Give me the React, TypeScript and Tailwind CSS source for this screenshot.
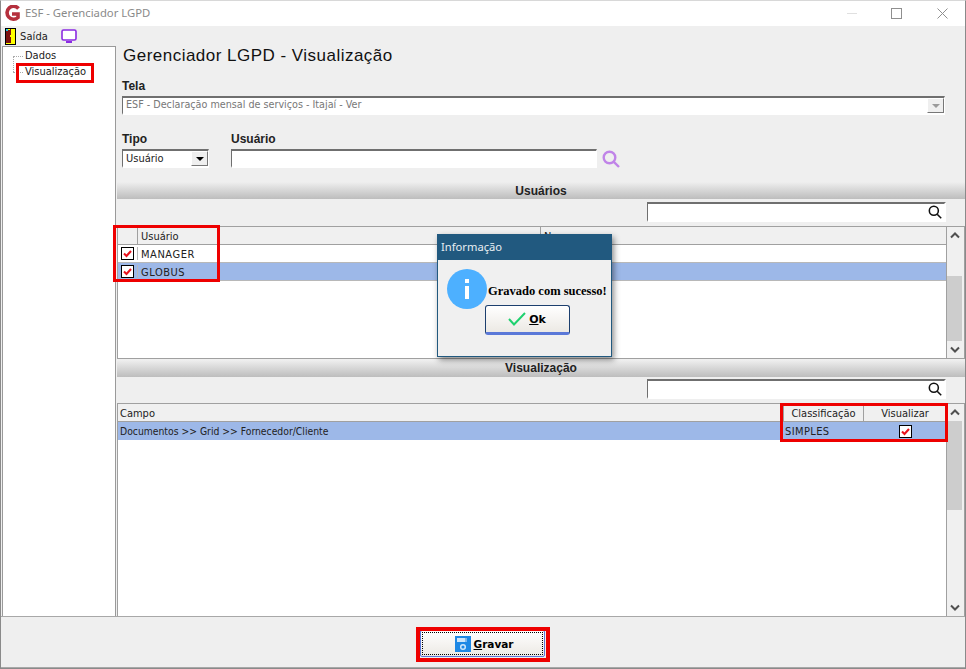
const ui = "font-['DejaVu_Sans_Condensed','DejaVu_Sans',sans-serif]";
const sunken = "border-t-2 border-l border-t-[#6f6f6f] border-l-[#6f6f6f] border-b-2 border-r border-b-white border-r-white bg-white";
const bold = "font-['Liberation_Sans',sans-serif] text-[12px] font-bold";

function Logo() {
  return (
    <svg width="17" height="17" viewBox="0 0 17 17">
      <path d="M14.500 3.500A6.500 6.500 0 1 0 14 12.500V9H8" fill="none" stroke="#b5303d" strokeWidth="3.600" />
    </svg>
  );
}

function DoorIcon() {
  return (
    <svg width="11" height="17" viewBox="0 0 11 17" shapeRendering="crispEdges">
      <rect width="11" height="17" fill="#000" />
      <rect x="1" y="1" width="9" height="15" fill="#ffff00" />
      <path d="M1 3h1V2h3V1h1v14H1z" fill="#7c1010" />
      <rect x="1" y="1" width="2" height="2" fill="#22c8e8" />
      <rect x="5" y="7" width="1" height="2" fill="#ffff00" />
    </svg>
  );
}

function MonitorIcon() {
  return (
    <svg width="16" height="14" viewBox="0 0 16 14">
      <rect x="1" y="1" width="14" height="10" rx="1.500" fill="#fff" stroke="#8b2be2" strokeWidth="1.600" />
      <rect x="5" y="12" width="6" height="2" fill="#8b2be2" />
    </svg>
  );
}

function Floppy() {
  return (
    <svg width="16" height="16" viewBox="0 0 16 16">
      <path d="M0 0h16v16H0z" fill="#1e88e5" />
      <rect x="2" y="2" width="10" height="4" fill="#cfe6fa" />
      <rect x="10" y="2" width="2" height="4" fill="#7fb8ee" />
      <circle cx="8" cy="11" r="2.300" fill="none" stroke="#cfe6fa" strokeWidth="1.500" />
    </svg>
  );
}

function Magnifier({ size, color, stroke }: { size: number; color: string; stroke: number }) {
  return (
    <svg width={size} height={size} viewBox="0 0 18 18" className="shrink-0">
      <circle cx="7.500" cy="7.500" r="5.800" fill="none" stroke={color} strokeWidth={stroke} />
      <path d="M11.800 11.800L17 17" stroke={color} strokeWidth={stroke} />
    </svg>
  );
}

function Tick() {
  return (
    <span className="flex h-[13px] w-[13px] items-center justify-center border border-black bg-white">
      <svg width="11" height="11" viewBox="0 0 11 11">
        <path d="M2 5.500l2.500 2.500L9 3" fill="none" stroke="#e8121c" strokeWidth="2.100" />
      </svg>
    </span>
  );
}

function Caret({ muted = false }: { muted?: boolean }) {
  return (
    <span className="flex h-full w-[17px] items-center justify-center border-t border-l border-t-white border-l-white border-r border-b border-r-[#777] border-b-[#777] bg-[#efefef]">
      <span className={`h-0 w-0 border-x-[4px] border-t-[4px] border-x-transparent ${muted ? "border-t-[#9a9a9a]" : "border-t-black"}`} />
    </span>
  );
}

function SectionBar({ title, nudge = "" }: { title: string; nudge?: string }) {
  return (
    <div className={`flex h-[17px] items-center justify-center bg-gradient-to-b from-[#efefef] to-[#bdbdbd] ${bold} text-[#222] ${nudge}`}>
      {title}
    </div>
  );
}

function SearchBox() {
  return (
    <div className="ml-[530px] flex h-[20px] w-[299px] items-center justify-end border-t-2 border-l border-t-[#6f6f6f] border-l-[#6f6f6f] border-b-2 border-r-2 border-b-white border-r-white bg-white pr-[2px]">
      <Magnifier size={14} color="#111" stroke={2} />
    </div>
  );
}

function Scrollbar({ thumb }: { thumb: string }) {
  return (
    <div className="flex w-[18px] shrink-0 flex-col border-l border-[#a0a0a0] bg-[#f0f0f0]">
      <svg width="16" height="17" viewBox="0 0 16 17" className="shrink-0">
        <path d="M4 10.500l4-4 4 4" fill="none" stroke="#505050" strokeWidth="2" />
      </svg>
      <div className={`mr-[2px] ${thumb} bg-[#cdcdcd]`} />
      <div className="flex-1" />
      <svg width="16" height="17" viewBox="0 0 16 17" className="shrink-0">
        <path d="M4 6.500l4 4 4-4" fill="none" stroke="#505050" strokeWidth="2" />
      </svg>
    </div>
  );
}

function RedBox({ className }: { className: string }) {
  return <div className={`pointer-events-none absolute border-[3px] border-[#ee0000] ${className}`} />;
}

export default function App() {
  return (
    <div className={`${ui} relative flex h-[669px] w-[966px] flex-col overflow-hidden border border-[#8a8a8a] border-t-[#d8d8d8] bg-[#efefef] text-[11px] leading-none text-[#222]`}>
      {/* title bar */}
      <div className="flex h-[25px] shrink-0 items-center bg-white pl-[3px] font-['Noto_Sans',sans-serif] text-[11.300px] text-[#8a8a8a]">
        <Logo />
        <span className="mb-[2px] ml-[4px]">ESF - Gerenciador LGPD</span>
        <div className="ml-auto flex items-center">
          <div className="mr-[34px] h-px w-[10px] bg-[#e0e0e0]" />
          <div className="mr-[35px] h-[11px] w-[11px] border border-[#8f8f8f]" />
          <svg width="11" height="11" viewBox="0 0 11 11" className="mr-[17px]">
            <path d="M0.500 0.500l10 10M10.500 0.500l-10 10" stroke="#8f8f8f" strokeWidth="1" />
          </svg>
        </div>
      </div>

      {/* toolbar */}
      <div className="flex h-[20px] shrink-0 items-center pl-[4px]">
        <DoorIcon />
        <span className="ml-[4px] tracking-[0.1px]">Saída</span>
        <span className="ml-[13px] flex"><MonitorIcon /></span>
      </div>

      <div className="flex min-h-0 flex-1">
        {/* tree */}
        <div className="relative ml-[1px] w-[114px] shrink-0 border-t border-l border-r border-[#9a9a9a] bg-white">
          <div className="absolute left-[10px] top-[9px] h-[16px] border-l border-dotted border-[#aaa]" />
          <div className="absolute left-[10px] top-[9px] w-[10px] border-t border-dotted border-[#aaa]" />
          <div className="absolute left-[10px] top-[25px] w-[10px] border-t border-dotted border-[#aaa]" />
          <div className="flex flex-col gap-[4px] pl-[22px] pt-[3px]">
            <span className="leading-[12px]">Dados</span>
            <span className="leading-[12px]">Visualização</span>
          </div>
        </div>

        {/* content */}
        <div className="flex min-w-0 flex-1 flex-col">
          <h1 className="ml-[7px] h-[25px] font-['Liberation_Sans',sans-serif] text-[17px] leading-[20px] tracking-[0.48px] text-[#111]">
            Gerenciador LGPD - Visualização
          </h1>

          <label className={`ml-[6px] mt-[9px] block h-[12px] ${bold} leading-[12px]`}>Tela</label>
          <div className={`ml-[6px] mt-[4px] flex h-[19px] w-[823px] items-center ${sunken} pl-[3px] text-[10.700px] text-[#777]`}>
            <span className="flex-1">ESF - Declaração mensal de serviços - Itajaí - Ver</span>
            <Caret muted />
          </div>

          <div className="ml-[6px] mt-[18px] flex gap-[22px]">
            <div className="flex flex-col gap-[4px]">
              <span className={`h-[12px] ${bold} leading-[12px]`}>Tipo</span>
              <div className={`flex h-[19px] w-[87px] items-center ${sunken} pl-[3px]`}>
                <span className="flex-1">Usuário</span>
                <Caret />
              </div>
            </div>
            <div className="flex flex-col gap-[4px]">
              <span className={`h-[12px] ${bold} leading-[12px]`}>Usuário</span>
              <div className="flex items-center">
                <div className={`h-[19px] w-[366px] ${sunken}`} />
                <span className="ml-[5px] mt-[1px] flex"><Magnifier size={18} color="#c084e8" stroke={2.400} /></span>
              </div>
            </div>
          </div>

          <div className="ml-[1px] mt-[14px]">
            <SectionBar title="Usuários" />
            <div className="mt-[3px]"><SearchBox /></div>
          </div>

          {/* users grid */}
          <div className="ml-[1px] mt-[4px] flex h-[133px] w-[848px] shrink-0 border border-[#a0a0a0] bg-white">
            <div className="min-w-0 flex-1">
              <div className="flex h-[18px] border-b border-[#a0a0a0] bg-[#f0f0f0]">
                <span className="w-[20px] border-r border-[#a0a0a0]" />
                <span className="flex w-[403px] items-center border-r border-[#a0a0a0] pl-[3px] pt-[1px]">Usuário</span>
                <span className="flex items-center pl-[3px] pt-[1px]">Nome</span>
              </div>
              <div className="flex h-[18px] items-center border-b border-[#b8b8b8]">
                <span className="flex w-[20px] justify-center border-r border-[#b8b8b8]"><Tick /></span>
                <span className="pl-[3px] pt-[1px] tracking-[0.55px]">MANAGER</span>
              </div>
              <div className="flex h-[18px] items-center border-b border-[#b8b8b8] bg-[#9db8e8]">
                <span className="flex w-[20px] justify-center border-r border-[#b8b8b8]"><Tick /></span>
                <span className="pl-[3px] pt-[1px] tracking-[0.55px]">GLOBUS</span>
              </div>
            </div>
            <Scrollbar thumb="mt-[32px] h-[65px]" />
          </div>

          <div className="ml-[1px] mt-[1px]">
            <SectionBar title="Visualização" nudge="pb-[2px]" />
            <div className="mt-[2px]"><SearchBox /></div>
          </div>

          {/* fields grid */}
          <div className="ml-[1px] mt-[4px] flex min-h-0 flex-1 border-x border-t border-[#a0a0a0] bg-white">
            <div className="min-w-0 flex-1">
              <div className="flex h-[18px] border-b border-[#a0a0a0] bg-[#f0f0f0]">
                <span className="flex w-[666px] items-center border-r border-[#a0a0a0] pl-[2px] pt-[1px]">Campo</span>
                <span className="flex w-[80px] items-center justify-center border-r border-[#a0a0a0] pt-[1px]">Classificação</span>
                <span className="flex flex-1 items-center justify-center pt-[1px]">Visualizar</span>
              </div>
              <div className="flex h-[18px] items-center bg-[#9db8e8]">
                <span className="w-[666px] pl-[2px] pt-[1px] text-[10.300px]">Documentos &gt;&gt; Grid &gt;&gt; Fornecedor/Cliente</span>
                <span className="w-[80px] border-x border-transparent pt-[1px] tracking-[0.4px]">SIMPLES</span>
                <span className="flex flex-1 justify-center"><Tick /></span>
              </div>
            </div>
            <Scrollbar thumb="h-[89px]" />
          </div>
        </div>
      </div>

      {/* footer */}
      <div className="flex h-[52px] shrink-0 items-center justify-center border-y border-[#a8a8a8] bg-[#efefef] pt-[3px] pr-[1px]">
        <button type="button" className="flex h-[27px] w-[125px] items-center justify-center gap-[3px] rounded-[2px] border border-[#5a78d8] bg-gradient-to-b from-white to-[#ece9e4] pl-[3px] pt-[1px] font-['DejaVu_Sans',sans-serif] text-[10.500px] font-bold text-black outline-1 -outline-offset-3 outline-black outline-dotted">
          <Floppy />
          <span><u>G</u>ravar</span>
        </button>
      </div>

      {/* annotations over the window */}
      <RedBox className="left-[15px] top-[62px] h-[20px] w-[78px]" />
      <RedBox className="left-[112px] top-[224px] h-[57px] w-[107px]" />
      <RedBox className="left-[779px] top-[402px] h-[39px] w-[168px]" />
      <div className="pointer-events-none absolute left-[415px] top-[626px] h-[35px] w-[134px] border-[4px] border-[#ee0000]" />

      {/* message dialog */}
      <div className="absolute left-[436px] top-[233px] flex h-[123px] w-[175px] flex-col border border-[#21597f] bg-[#f0f0f0] shadow-[2px_3px_6px_rgba(0,0,0,0.45)]">
        <div className="flex h-[25px] shrink-0 items-center bg-[#21597f] pb-[2px] pl-[3px] font-['Noto_Sans',sans-serif] text-[11.200px] text-[#e8eef2]">Informação</div>
        <div className="flex items-center pl-[9px] pt-[9px]">
          <span className="flex h-[40px] w-[40px] shrink-0 items-center justify-center rounded-full bg-[#4db0ff]">
            <svg width="6" height="20" viewBox="0 0 6 20" shapeRendering="crispEdges">
              <rect x="1" y="0" width="4" height="4" fill="#fff" />
              <rect x="1" y="7" width="4" height="13" fill="#fff" />
            </svg>
          </span>
          <span className="ml-px mt-[4px] whitespace-nowrap font-['Liberation_Serif',serif] text-[12.500px] font-bold text-black">Gravado com sucesso!</span>
        </div>
        <div className="mt-[-4px] flex justify-center pl-[5px]">
          <button type="button" className="flex h-[30px] w-[85px] items-center justify-center gap-[3px] rounded-[3px] border border-[#1c3f6e] border-b-[3px] border-b-[#5a78d8] bg-gradient-to-b from-white to-[#ece9e4] font-['DejaVu_Sans',sans-serif] text-[11px] font-bold text-black">
            <svg width="18" height="14" viewBox="0 0 18 14">
              <path d="M1 7l5 5.500L17 1" fill="none" stroke="#1fd16f" strokeWidth="2" />
            </svg>
            <span><u>O</u>k</span>
          </button>
        </div>
      </div>
    </div>
  );
}
